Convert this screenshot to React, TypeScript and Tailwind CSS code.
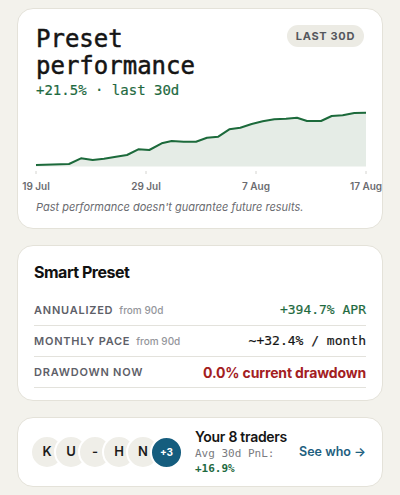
import React from "react";

const mono = "font-['DejaVu_Sans_Mono','Liberation_Mono',monospace]";
const sans = "font-['Inter','Noto_Sans',sans-serif]";

// points in chart-local coords (x from 0..330, y from chart top)
const punkte: [number, number][] = [
  [0, 61], [33, 60], [45, 54.3], [56.7, 56], [68, 54.7], [80, 52.7], [91, 51],
  [102.3, 45.3], [113.3, 46], [125.7, 39.3], [135.7, 37], [147.7, 37.7], [160, 37.7],
  [171, 33.7], [182.3, 32.7], [193.3, 25.3], [204.3, 23.7], [215.7, 20], [226.7, 17.3],
  [238.3, 15.3], [250, 14.7], [261, 13.7], [271, 17], [285, 17], [295.7, 12],
  [306.7, 11.3], [318.3, 9], [330, 8.7],
];

function Grafico() {
  const linha = punkte.map((p, i) => `${i === 0 ? "M" : "L"}${p[0]} ${p[1]}`).join(" ");
  const area = `${linha} L330 62.5 L0 62.5 Z`;
  const ticks = [
    { x: 0, label: "19 Jul" },
    { x: 110, label: "29 Jul" },
    { x: 220, label: "7 Aug" },
    { x: 330, label: "17 Aug" },
  ];
  return (
    <svg width="330" height="88" viewBox="0 0 330 88" className="block overflow-visible mt-[5px]">
      <path d={area} fill="#e5ece6" />
      <path d={linha} fill="none" stroke="#1c6a3b" strokeWidth="2" strokeLinejoin="round" />
      {ticks.map((t) => (
        <g key={t.label}>
          <line x1={t.x} x2={t.x} y1="67" y2="70" stroke="#d4d4d0" strokeWidth="1" />
          <text
            x={t.x}
            y="86"
            textAnchor="middle"
            fontSize="10"
            fontWeight="600"
            fill="#6b6b70"
            fontFamily="Inter, 'Noto Sans', sans-serif"
          >
            {t.label}
          </text>
        </g>
      ))}
    </svg>
  );
}

function Linha({ rotulo, extra, children }: { rotulo: string; extra?: string; children: React.ReactNode }) {
  return (
    <div className="flex items-center justify-between h-[31px] border-b border-[#e3e2dc]">
      <div className="flex items-baseline gap-1.5">
        <span className={`${sans} text-[11px] font-semibold tracking-[0.07em] text-[#5e6068]`}>{rotulo}</span>
        {extra && <span className={`${sans} text-[10px] font-medium text-[#94969b]`}>{extra}</span>}
      </div>
      {children}
    </div>
  );
}

export default function App() {
  const iniciais = ["K", "U", "-", "H", "N"];
  return (
    <div className={`min-h-[495px] bg-[#f3f2ec] px-[17px] pt-2 pb-4 flex flex-col gap-4 ${sans}`}>
      <div className="bg-white border border-[#e4e2d9] rounded-2xl px-[18px] pt-4 pb-[14px]">
        <div className="flex justify-between items-start">
          <div>
            <h1 className={`${mono} text-[24px] leading-[26.5px] font-normal text-[#151515] mt-[1px] [-webkit-text-stroke:0.5px_#151515]`}>
              Preset
              <br />
              performance
            </h1>
            <p className={`${mono} text-[14px] leading-[18px] text-[#1f6a3f] mt-[2px] [-webkit-text-stroke:0.2px_#1f6a3f]`}>
              +21.5% · last 30d
            </p>
          </div>
          <span className="bg-[#ecebe4] text-[#55575d] text-[11px] font-bold tracking-[0.06em] rounded-full h-[22px] px-[9px] flex items-center">
            LAST 30D
          </span>
        </div>
        <Grafico />
        <p className="text-[11px] italic text-[#6a6b70] mt-[8px] leading-[14px]">
          Past performance doesn't guarantee future results.
        </p>
      </div>

      <div className="bg-white border border-[#e4e2d9] rounded-2xl px-4 pt-4 pb-[12px]">
        <h2 className="text-[16px] leading-[20px] font-bold tracking-[-0.03em] text-[#111]">Smart Preset</h2>
        <div className="mt-[13px]">
          <Linha rotulo="ANNUALIZED" extra="from 90d">
            <span className={`${mono} text-[13px] text-[#1f6a3f] [-webkit-text-stroke:0.2px_#1f6a3f]`}>+394.7% APR</span>
          </Linha>
          <Linha rotulo="MONTHLY PACE" extra="from 90d">
            <span className={`${mono} text-[13px] text-[#151515] [-webkit-text-stroke:0.2px_#151515]`}>~+32.4% / month</span>
          </Linha>
          <Linha rotulo="DRAWDOWN NOW">
            <span className="text-[14px] font-bold tracking-[-0.01em] text-[#a3201f]">0.0% current drawdown</span>
          </Linha>
        </div>
      </div>

      <div className="bg-white border border-[#e4e2d9] rounded-2xl pl-3 pr-4 py-[10px] flex items-center">
        <div className="flex items-center">
          {iniciais.map((l, i) => (
            <div
              key={i}
              className={`w-[34px] h-[34px] rounded-full bg-[#efeee8] border-2 border-white flex items-center justify-center text-[13px] font-semibold text-[#1b1b1b] ${i > 0 ? "-ml-[10px]" : ""}`}
            >
              {l}
            </div>
          ))}
          <div className="w-[33px] h-[33px] -ml-[10px] rounded-full bg-[#155d7e] border-2 border-white flex items-center justify-center text-[10px] font-bold text-white">
            +3
          </div>
        </div>
        <div className="ml-[12px] flex-1">
          <p className="text-[14px] leading-[18px] font-semibold tracking-[-0.02em] text-[#151515]">Your 8 traders</p>
          <p className={`${mono} text-[11px] leading-[15px] text-[#7a7b80]`}>Avg 30d PnL:</p>
          <p className={`${mono} text-[11px] leading-[15px] font-bold text-[#1f6a3f]`}>+16.9%</p>
        </div>
        <span className="text-[12.5px] font-semibold text-[#1e5f80]">See who →</span>
      </div>
    </div>
  );
}
